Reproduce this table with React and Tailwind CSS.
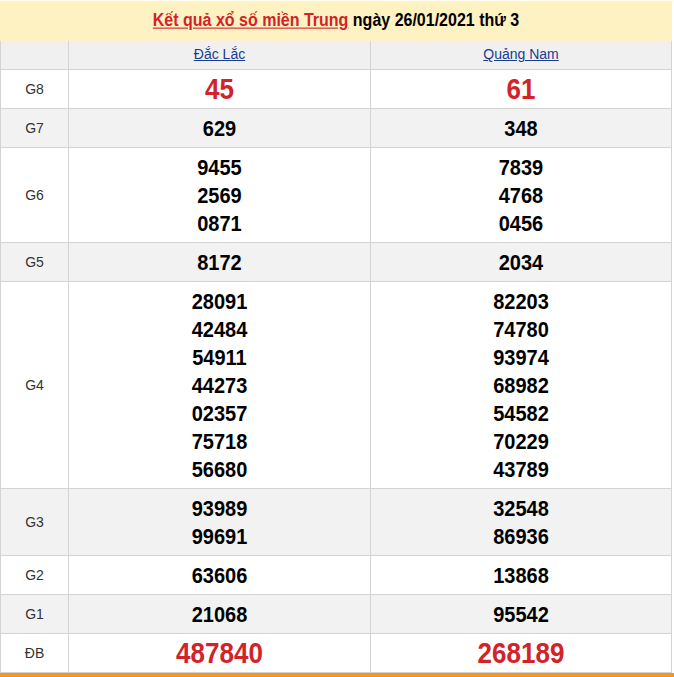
import React from "react";

const rows = [
  { label: "G8", a: ["45"], b: ["61"], big: true, bg: "bg-white" },
  { label: "G7", a: ["629"], b: ["348"], bg: "bg-[#f2f2f2]" },
  { label: "G6", a: ["9455", "2569", "0871"], b: ["7839", "4768", "0456"], bg: "bg-white" },
  { label: "G5", a: ["8172"], b: ["2034"], bg: "bg-[#f2f2f2]" },
  {
    label: "G4",
    a: ["28091", "42484", "54911", "44273", "02357", "75718", "56680"],
    b: ["82203", "74780", "93974", "68982", "54582", "70229", "43789"],
    bg: "bg-white",
  },
  { label: "G3", a: ["93989", "99691"], b: ["32548", "86936"], bg: "bg-[#f2f2f2]" },
  { label: "G2", a: ["63606"], b: ["13868"], bg: "bg-white" },
  { label: "G1", a: ["21068"], b: ["95542"], bg: "bg-[#f2f2f2]" },
  { label: "ĐB", a: ["487840"], b: ["268189"], big: true, bg: "bg-white" },
];

function Nums({ list, big }) {
  return (
    <td className="border border-[#d4d4d4] py-[5px] text-center align-middle">
      {list.map((n) => (
        <div
          key={n}
          className={
            big
              ? "h-[28px] leading-[28px] text-[26px] font-bold text-[#d2232a] scale-y-110"
              : "h-[28px] leading-[28px] text-[20px] font-bold text-black scale-y-110"
          }
        >
          {n}
        </div>
      ))}
    </td>
  );
}

export default function App() {
  return (
    <div className="w-[674px] h-[677px] bg-white font-['Liberation_Sans'] overflow-hidden flex flex-col">
      <div className="h-[3px] bg-[#fffdf2]" />
      <div className="w-[672px] h-[38px] bg-[#fff2c2] flex items-center justify-center text-[16px] font-bold scale-y-110">
        <span className="text-[#d2232a] underline">Kết quả xổ số miền Trung</span>
        <span className="text-black">&nbsp;ngày 26/01/2021 thứ 3</span>
      </div>
      <table className="w-[671px] border-collapse table-fixed">
        <colgroup>
          <col className="w-[68px]" />
          <col className="w-[302px]" />
          <col className="w-[301px]" />
        </colgroup>
        <thead>
          <tr className="bg-[#f0f0f0] h-[30px]">
            <th className="border border-[#d4d4d4]" />
            <th className="border border-[#d4d4d4] text-[14px] font-normal text-[#1a3c8f] underline">
              Đắc Lắc
            </th>
            <th className="border border-[#d4d4d4] text-[14px] font-normal text-[#1a3c8f] underline">
              Quảng Nam
            </th>
          </tr>
        </thead>
        <tbody>
          {rows.map((r) => (
            <tr key={r.label} className={r.bg}>
              <td className="border border-[#d4d4d4] text-center text-[14px] text-[#333]">{r.label}</td>
              <Nums list={r.a} big={r.big} />
              <Nums list={r.b} big={r.big} />
            </tr>
          ))}
        </tbody>
      </table>
      <div className="h-[4px] bg-[#f7931e]" />
    </div>
  );
}
